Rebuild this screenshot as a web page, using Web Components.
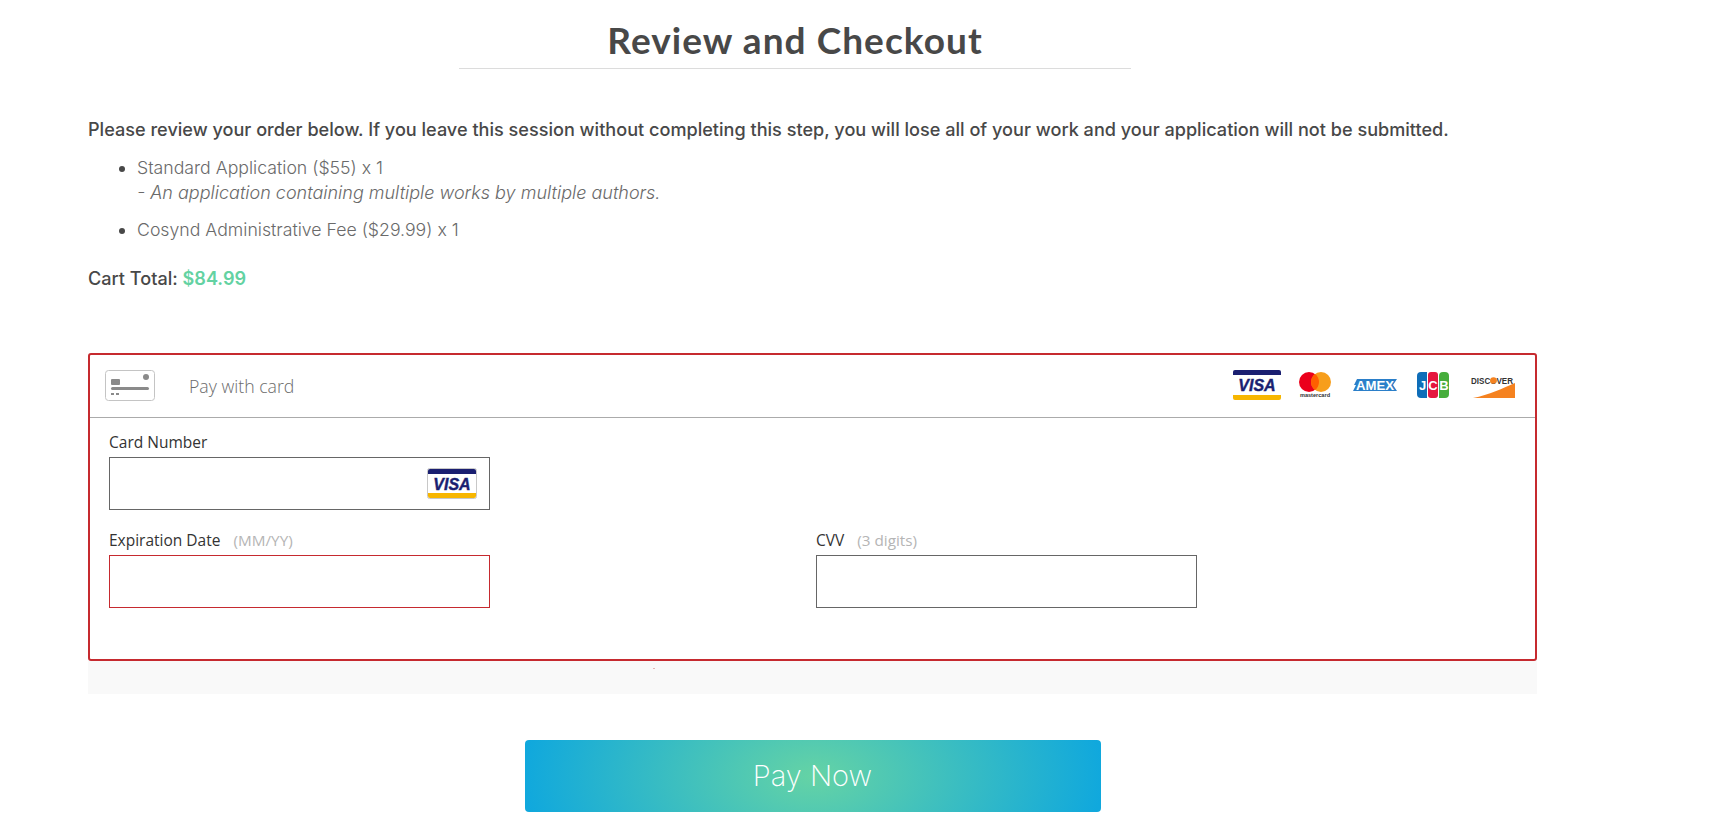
<!DOCTYPE html>
<html lang="en">
<head>
<meta charset="utf-8">
<title>Review and Checkout</title>
<style>
    html, body { margin: 0; background: #fff; }
    body { font-family: "Inter", "Liberation Sans", sans-serif; color: #484848; }
</style>
</head>
<body>
<checkout-page>
    <page-title slot="title">Review and Checkout</page-title>
    <order-summary slot="summary" total="$84.99">
        <span slot="intro">Please review your order below. If you leave this session without completing this step, you will lose all of your work and your application will not be submitted.</span>
        <order-item note="- An application containing multiple works by multiple authors.">Standard Application ($55) x 1</order-item>
        <order-item>Cosynd Administrative Fee ($29.99) x 1</order-item>
    </order-summary>
    <card-form slot="form"></card-form>
    <pay-button slot="pay">Pay Now</pay-button>
</checkout-page>

<script>
class CheckoutPage extends HTMLElement {
    constructor() {
        super();
        this.attachShadow({mode: 'open'});
        this.shadowRoot.innerHTML = `
            <style>
                :host { display: block; height: 839px; overflow: hidden; }
                #head { width: 1590px; display: flex; justify-content: center; }
                #main { padding: 0 0 0 88px; width: 1449px; }
                #form { margin-top: 62px; }
                #pay { margin-top: 46px; display: flex; justify-content: center; }
            </style>
            <div id="head"><slot name="title"></slot></div>
            <div id="main">
                <slot name="summary"></slot>
                <div id="form"><slot name="form"></slot></div>
                <div id="pay"><slot name="pay"></slot></div>
            </div>
        `;
    }
}

class PageTitle extends HTMLElement {
    constructor() {
        super();
        this.attachShadow({mode: 'open'});
        this.shadowRoot.innerHTML = `
            <style>
                :host { display: block; width: 672px; border-bottom: 1px solid #dcdcdc; padding: 19px 0 7px; text-align: center; }
                h1 { margin: 0; font: 700 37px/42px "Lato", sans-serif; color: #484848; letter-spacing: 1.05px; }
            </style>
            <h1><slot></slot></h1>
        `;
    }
}

class OrderSummary extends HTMLElement {
    constructor() {
        super();
        this.attachShadow({mode: 'open'});
        this.shadowRoot.innerHTML = `
            <style>
                :host { display: block; padding-top: 47px; font-family: "Inter", sans-serif; }
                p { margin: 0; font-size: 18.1px; line-height: 26px; font-weight: 500; color: #484848; }
                ul { margin: 13px 0 0; padding: 0 0 0 49px; }
                #total { margin-top: 23px; }
                #total b { color: #63d2a2; font-weight: 600; }
            </style>
            <p><slot name="intro"></slot></p>
            <ul><slot></slot></ul>
            <p id="total">Cart Total: <b></b></p>
        `;
    }
    connectedCallback() {
        this.shadowRoot.querySelector('b').textContent = this.getAttribute('total');
    }
}

class OrderItem extends HTMLElement {
    constructor() {
        super();
        this.attachShadow({mode: 'open'});
        this.shadowRoot.innerHTML = `
            <style>
                :host { display: list-item; font: 300 17.7px/25px "Inter", sans-serif; color: #6a6a6a; margin-bottom: 12px; }
                :host::marker { color: #484848; }
                em { display: block; font-size: 18px; }
                em:empty { display: none; }
            </style>
            <slot></slot><em></em>
        `;
    }
    connectedCallback() {
        this.shadowRoot.querySelector('em').textContent = this.getAttribute('note') || '';
    }
}

class CardLogo extends HTMLElement {
    constructor() {
        super();
        this.attachShadow({mode: 'open'});
    }
    connectedCallback() {
        const logos = {
            visa: `<svg width="48" height="30" viewBox="0 0 48 30">
                <rect width="48" height="30" rx="2" fill="#fff"/>
                <path d="M0 5V2a2 2 0 0 1 2-2h44a2 2 0 0 1 2 2v3z" fill="#1a1f71"/>
                <path d="M0 25h48v3a2 2 0 0 1-2 2H2a2 2 0 0 1-2-2z" fill="#f7b600"/>
                <text x="24" y="21" text-anchor="middle" font-family="Liberation Sans" font-weight="700" font-style="italic" font-size="16" stroke="#1a1f71" stroke-width=".4" fill="#1a1f71">VISA</text>
            </svg>`,
            visaField: `<svg width="50" height="31" viewBox="0 0 50 31">
                <rect x=".5" y=".5" width="49" height="30" rx="2" fill="#fff" stroke="#c8c8c8"/>
                <path d="M1 6V3a2 2 0 0 1 2-2h44a2 2 0 0 1 2 2v3z" fill="#1a1f71"/>
                <path d="M1 25h48v3a2 2 0 0 1-2 2H3a2 2 0 0 1-2-2z" fill="#f7b600"/>
                <text x="25" y="22" text-anchor="middle" font-family="Liberation Sans" font-weight="700" font-style="italic" font-size="16" stroke="#1a1f71" stroke-width=".4" fill="#1a1f71">VISA</text>
            </svg>`,
            mastercard: `<svg width="32" height="26" viewBox="0 0 32 26">
                <circle cx="10" cy="10" r="10" fill="#eb001b"/>
                <circle cx="22" cy="10" r="10" fill="#f79e1b"/>
                <path d="M16 2a10 10 0 0 1 0 16a10 10 0 0 1 0-16z" fill="#ff5f00"/>
                <text x="16" y="25" text-anchor="middle" font-family="Liberation Sans" font-size="5.6" font-weight="700" fill="#333">mastercard</text>
            </svg>`,
            amex: `<svg width="44" height="12" viewBox="0 0 44 12">
                <path d="M4 0h40l-4 6 4 6H0l3-6H1z" fill="#2b7fc9"/>
                <text x="22" y="10.6" text-anchor="middle" font-family="Liberation Sans" font-size="12" font-weight="700" textLength="38" lengthAdjust="spacingAndGlyphs" fill="#fff">AMEX</text>
            </svg>`,
            jcb: `<svg width="32" height="26" viewBox="0 0 32 26">
                <path d="M4 0h6v26H4a4 4 0 0 1-4-4V4a4 4 0 0 1 4-4z" fill="#0e6db8"/>
                <rect x="11" width="10" height="26" rx="3" fill="#e5173f"/>
                <path d="M26 0h2a4 4 0 0 1 4 4v18a4 4 0 0 1-4 4h-6V4a4 4 0 0 1 4-4z" fill="#46ad3c"/>
                <text x="5.5" y="18" text-anchor="middle" font-family="Liberation Sans" font-size="13" font-weight="700" fill="#fff">J</text>
                <text x="16" y="18" text-anchor="middle" font-family="Liberation Sans" font-size="13" font-weight="700" fill="#fff">C</text>
                <text x="27" y="18" text-anchor="middle" font-family="Liberation Sans" font-size="13" font-weight="700" fill="#fff">B</text>
            </svg>`,
            discover: `<svg width="46" height="22" viewBox="0 0 46 22">
                <path d="M2 22C18 19 32 12 44 7v15z" fill="#f58220"/>
                <text x="0" y="7.5" font-family="Liberation Sans" font-size="8.6" font-weight="700" textLength="42" lengthAdjust="spacingAndGlyphs" fill="#333">DISCOVER</text>
                <circle cx="22.5" cy="4.5" r="3.3" fill="#f58220"/>
            </svg>`
        };
        this.shadowRoot.innerHTML = `
            <style>
                :host { display: block; }
                svg { display: block; overflow: visible; }
            </style>
            ${logos[this.getAttribute('name')]}
        `;
    }
}

class CardField extends HTMLElement {
    constructor() {
        super();
        this.attachShadow({mode: 'open'});
        this.shadowRoot.innerHTML = `
            <style>
                :host { display: block; width: 381px; font-family: "Open Sans", "Noto Sans", sans-serif; }
                label { display: block; font-size: 15.5px; line-height: 20px; color: #333; margin-bottom: 5px; }
                small { font-size: 15.3px; color: #b5b5b5; margin-left: 13px; }
                #box { height: 51px; border: 1px solid #666; background: #fff; display: flex; align-items: center; justify-content: flex-end; padding-right: 12px; }
                :host([invalid]) #box { border-color: #c62a2f; }
            </style>
            <label><span></span><small></small></label>
            <div id="box"><slot></slot></div>
        `;
    }
    connectedCallback() {
        this.shadowRoot.querySelector('span').textContent = this.getAttribute('label');
        this.shadowRoot.querySelector('small').textContent = this.getAttribute('hint') || '';
    }
}

class CardForm extends HTMLElement {
    constructor() {
        super();
        this.attachShadow({mode: 'open'});
        this.shadowRoot.innerHTML = `
            <style>
                :host { display: block; width: 1449px; }
                #frame { border: 2px solid #c62a2f; border-radius: 3px; box-sizing: border-box; height: 308px; background: #fff; }
                #top { height: 63px; box-sizing: border-box; border-bottom: 1px solid #ababab; display: flex; align-items: center; padding: 0 18px 2px 15px; font: 300 17.7px "Open Sans", sans-serif; color: #6b6b6b; }
                #top span { margin-top: 2px; }
                #chip { margin-right: 34px; line-height: 0; }
                #logos { margin-left: auto; display: flex; align-items: center; }
                #logos card-logo:nth-child(1) { margin-right: 18px; }
                #logos card-logo:nth-child(2) { margin-right: 22px; }
                #logos card-logo:nth-child(3) { margin-right: 20px; }
                #logos card-logo:nth-child(4) { margin-right: 22px; }
                #logos card-logo:nth-child(5) { margin-top: 4px; }
                #body { padding: 14px 19px 0; }
                #row { display: grid; grid-template-columns: 381px 381px; column-gap: 326px; margin-top: 20px; }
                #tray { height: 33px; background: #f9f9f9; position: relative; }
                #tray i { position: absolute; left: 565px; top: 7px; width: 2px; height: 1px; background: #e4b4b4; }
            </style>
            <div id="frame">
                <div id="top">
                    <svg id="chip" width="50" height="31" viewBox="0 0 50 31">
                        <rect x=".5" y=".5" width="49" height="30" rx="3" fill="#fff" stroke="#c4c4c4"/>
                        <rect x="6" y="9" width="9" height="6" rx="1" fill="#8a8a8a"/>
                        <rect x="6" y="17" width="38" height="3" rx="1.5" fill="#8a8a8a"/>
                        <circle cx="41" cy="7" r="3" fill="#8a8a8a"/>
                        <rect x="6" y="23" width="3" height="2" fill="#8a8a8a"/>
                        <rect x="11" y="23" width="3" height="2" fill="#8a8a8a"/>
                    </svg>
                    <span>Pay with card</span>
                    <div id="logos">
                        <card-logo name="visa"></card-logo>
                        <card-logo name="mastercard"></card-logo>
                        <card-logo name="amex"></card-logo>
                        <card-logo name="jcb"></card-logo>
                        <card-logo name="discover"></card-logo>
                    </div>
                </div>
                <div id="body">
                    <card-field label="Card Number"><card-logo name="visaField"></card-logo></card-field>
                    <div id="row">
                        <card-field label="Expiration Date" hint="(MM/YY)" invalid></card-field>
                        <card-field label="CVV" hint="(3 digits)"></card-field>
                    </div>
                </div>
            </div>
            <div id="tray"><i></i></div>
        `;
    }
}

class PayButton extends HTMLElement {
    constructor() {
        super();
        this.attachShadow({mode: 'open'});
        this.shadowRoot.innerHTML = `
            <style>
                :host { display: block; }
                button {
                    display: block; width: 576px; height: 72px; border: 0; border-radius: 4px; padding: 0 0 2px;
                    background: radial-gradient(ellipse 290px 170px at 50% 50%, #65d3a5 0, #10a8dd 100%);
                    color: #fff; font: 200 29px "Inter", sans-serif;
                }
            </style>
            <button><slot></slot></button>
        `;
    }
}

customElements.define('checkout-page', CheckoutPage);
customElements.define('page-title', PageTitle);
customElements.define('order-summary', OrderSummary);
customElements.define('order-item', OrderItem);
customElements.define('card-logo', CardLogo);
customElements.define('card-field', CardField);
customElements.define('card-form', CardForm);
customElements.define('pay-button', PayButton);
</script>
</body>
</html>
